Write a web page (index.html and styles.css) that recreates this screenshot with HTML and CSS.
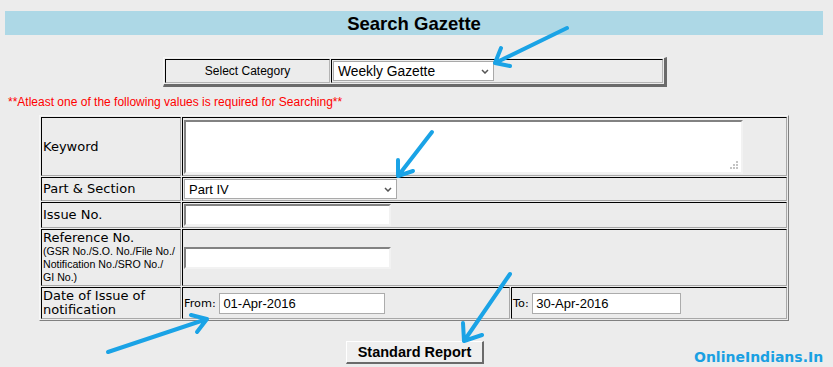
FILE: index.html
```html
<!DOCTYPE html>
<html lang="en">
<head>
  <meta charset="UTF-8">
  <meta name="viewport" content="width=device-width, initial-scale=1.0">
  <title>Search Gazette</title>
  <link rel="stylesheet" href="styles.css">
</head>
<body>
  <h1 class="title">Search Gazette</h1>

  <table class="category">
    <tr>
      <td class="cat-label">Select Category</td>
      <td class="cat-value">
        <span class="select-box sel-category">
          <select><option>Weekly Gazette</option></select>
          <svg class="chevron" width="8" height="5" viewBox="0 0 8 5"><path d="M1 1 L4 4 L7 1" fill="none" stroke="#555" stroke-width="1.5"/></svg>
        </span>
      </td>
    </tr>
  </table>

  <p class="required">**Atleast one of the following values is required for Searching**</p>

  <table class="search">
    <colgroup>
      <col class="c-label">
      <col class="c-from">
      <col class="c-to">
    </colgroup>
    <tr class="r-keyword">
      <td class="label">Keyword</td>
      <td colspan="2">
        <span class="area-box">
          <textarea></textarea>
          <svg class="grip" width="9" height="9" viewBox="0 0 9 9"><path d="M6 0h2v2h-2zM3 3h2v2h-2zM6 3h2v2h-2zM0 6h2v2h-2zM3 6h2v2h-2zM6 6h2v2h-2z" fill="#c4c4c4"/></svg>
        </span>
      </td>
    </tr>
    <tr class="r-part">
      <td class="label">Part &amp; Section</td>
      <td colspan="2">
        <span class="select-box sel-part">
          <select><option>Part IV</option></select>
          <svg class="chevron" width="8" height="5" viewBox="0 0 8 5"><path d="M1 1 L4 4 L7 1" fill="none" stroke="#555" stroke-width="1.5"/></svg>
        </span>
      </td>
    </tr>
    <tr class="r-issue">
      <td class="label">Issue No.</td>
      <td colspan="2"><input class="text-in" type="text"></td>
    </tr>
    <tr class="r-ref">
      <td class="label">
        Reference No.
        <div class="hint">(GSR No./S.O. No./File No./<br>Notification No./SRO No./<br>GI No.)</div>
      </td>
      <td colspan="2"><input class="text-in" type="text"></td>
    </tr>
    <tr class="r-date">
      <td class="label date-label">Date of Issue of notification</td>
      <td class="date-cell">From: <input class="date-in from-in" type="text" value="01-Apr-2016"></td>
      <td class="date-cell">To: <input class="date-in to-in" type="text" value="30-Apr-2016"></td>
    </tr>
  </table>

  <div class="actions">
    <button class="report-btn" type="button">Standard Report</button>
  </div>

  <div class="watermark">OnlineIndians.In</div>

  <svg class="arrows" width="833" height="367" viewBox="0 0 833 367">
    <g fill="none" stroke="#1aa3e6" stroke-width="4" stroke-linecap="round" stroke-linejoin="round">
      <path d="M567 28 L495 63 M501 48 L495 63 L510 66"/>
      <path d="M432 132 L398 176 M398 160 L398 176 L413 171"/>
      <path d="M108 352 L207 319 M191 315 L207 319 L197 332"/>
      <path d="M510 274 L464 341 M463 323 L464 341 L482 335"/>
    </g>
  </svg>
</body>
</html>
```

FILE: styles.css
```css
* {
  box-sizing: border-box;
}

body {
  margin: 0;
  width: 833px;
  height: 367px;
  overflow: hidden;
  position: relative;
  background: #ececec;
  color: #000;
  font-family: "Liberation Sans", Arial, sans-serif;
}

.title {
  margin: 11px 10px 0 5px;
  height: 24px;
  background: #add8e6;
  text-align: center;
  font: bold 18.5px/26px "Liberation Sans", Arial, sans-serif;
  overflow: hidden;
}

/* category picker */
.category {
  margin: 22px 0 0 163px;
  border-collapse: separate;
  border-spacing: 1px;
  border-style: solid;
  border-width: 1px 3px 3px 1px;
  border-color: #f6f6f6 #6a6a6a #6a6a6a #f6f6f6;
}

.category td {
  height: 24px;
  padding: 1px;
  border: 1px solid;
  border-color: #000 #b4b4b4 #b4b4b4 #000;
}

.cat-label {
  width: 165px;
  text-align: center;
  font-size: 12px;
}

.cat-value {
  width: 332px;
}

.select-box {
  position: relative;
  display: block;
}

.select-box select {
  appearance: none;
  -webkit-appearance: none;
  display: block;
  height: 20px;
  margin: 0;
  padding: 0 0 0 4px;
  border: 1px solid #a9a9a9;
  border-radius: 0;
  background: #fff;
  color: #000;
  font-family: "Liberation Sans", Arial, sans-serif;
}

.sel-category select {
  width: 161px;
  font-size: 13.8px;
}

.sel-part select {
  width: 213px;
  font-size: 13px;
}

.select-box .chevron {
  position: absolute;
  top: 8px;
  pointer-events: none;
}

.sel-category .chevron {
  left: 148px;
}

.sel-part .chevron {
  left: 200px;
}

.required {
  margin: 8px 0 0 8px;
  color: #f00;
  font-size: 12px;
  line-height: 14px;
}

/* search form */
.search {
  margin: 6px 0 0 39px;
  width: 749px;
  table-layout: fixed;
  border-collapse: separate;
  border-spacing: 1px;
  border: 1px solid;
  border-color: #f6f6f6 #808080 #808080 #f6f6f6;
}

.c-label { width: 140px; }
.c-from { width: 328px; }
.c-to { width: 276px; }

.search td {
  padding: 1px;
  border: 1px solid;
  border-color: #000 #a8a8a8 #a8a8a8 #000;
  vertical-align: middle;
  font: 13px/14px "DejaVu Sans", Verdana, sans-serif;
}

.r-keyword { height: 59px; }
.r-part { height: 24px; }
.r-issue { height: 26px; }
.r-ref { height: 57px; }
.r-date { height: 32px; }

.hint {
  font: 10.6px/13px "Liberation Sans", Arial, sans-serif;
}

.area-box {
  position: relative;
  display: block;
  width: 559px;
}

.area-box textarea {
  display: block;
  width: 559px;
  height: 54px;
  margin: 0;
  resize: none;
  border-style: solid;
  border-width: 2px;
  border-color: #828282 #f2f2f2 #f2f2f2 #828282;
  background: #fff;
}

.area-box .grip {
  position: absolute;
  right: 4px;
  bottom: 4px;
}

.text-in {
  display: block;
  width: 207px;
  height: 22px;
  margin: 0;
  border-style: solid;
  border-width: 2px;
  border-color: #828282 #f2f2f2 #f2f2f2 #828282;
  background: #fff;
}

.search .date-cell {
  font-size: 11.3px;
  white-space: nowrap;
}

.date-in {
  height: 21px;
  margin: 0;
  padding: 0 3px;
  vertical-align: middle;
  border: 1px solid #acacac;
  background: #fff;
  color: #000;
  font: 13px "Liberation Sans", Arial, sans-serif;
}

.from-in { width: 166px; }
.to-in { width: 149px; }

.actions {
  margin-top: 20px;
  display: flex;
  justify-content: center;
}

.report-btn {
  height: 23px;
  padding: 0 11px;
  margin-right: 3px;
  background: #efefef;
  border-style: solid;
  border-width: 1px 2px 2px 1px;
  border-color: #fff #6a6a6a #6a6a6a #fff;
  border-radius: 0;
  color: #000;
  font: bold 14.5px/18px "Liberation Sans", Arial, sans-serif;
}

.watermark {
  position: absolute;
  left: 694px;
  top: 349px;
  color: #1aa0e2;
  font: bold 14px "DejaVu Sans", Verdana, sans-serif;
}

.arrows {
  position: absolute;
  left: 0;
  top: 0;
  pointer-events: none;
}
```
